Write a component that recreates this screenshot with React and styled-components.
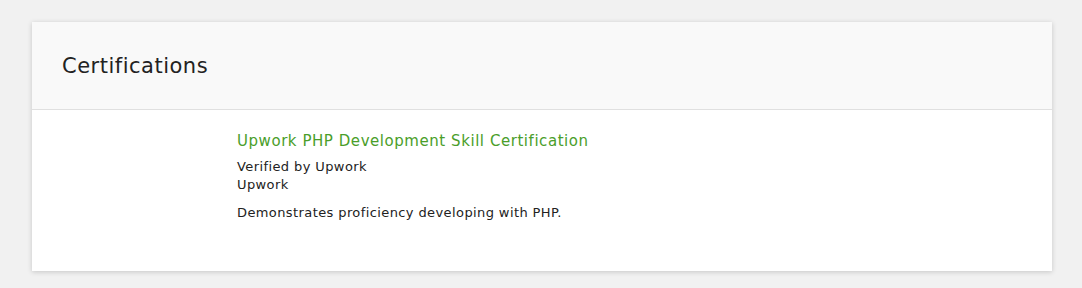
import React from "react";
import styled, { createGlobalStyle } from "styled-components";

const Global = createGlobalStyle`
    body{
        margin: 0;
        background: #f1f1f1;
        font-family: "DejaVu Sans", "Liberation Sans", sans-serif;
        color: #222;
    }
`;

const Page = styled.div`
    padding: 22px 30px 17px 32px;
`;

const Card = styled.section`
    width: 1020px;
    background: #fff;
    box-shadow: 0 1px 5px rgba(0,0,0,0.18);
`;

const CardHeader = styled.header`
    height: 88px;
    background: #f9f9f9;
    border-bottom: 1px solid #e0e0e0;
    padding: 0 30px;
    display: flex;
    align-items: center;
    box-sizing: border-box;

    h2{
        margin: 0;
        font-size: 21px;
        font-weight: 400;
        letter-spacing: 0.5px;
        color: #222;
    }
`;

const CardBody = styled.div`
    padding: 22px 30px 49px 205px;
`;

const CertTitle = styled.h3`
    margin: 0 0 8px;
    font-size: 15px;
    font-weight: 400;
    letter-spacing: 0.55px;
    color: #4a9e2a;
`;

const Line = styled.p`
    margin: 0;
    font-size: 13px;
    line-height: 18px;
    letter-spacing: 0.4px;
    margin-top: ${p => p.gap || 0}px;
`;

function App(){
    return (
        <>
            <Global />
            <Page>
                <Card>
                    <CardHeader>
                        <h2>Certifications</h2>
                    </CardHeader>
                    <CardBody>
                        <CertTitle>Upwork PHP Development Skill Certification</CertTitle>
                        <Line>Verified by Upwork</Line>
                        <Line>Upwork</Line>
                        <Line gap={10}>Demonstrates proficiency developing with PHP.</Line>
                    </CardBody>
                </Card>
            </Page>
        </>
    );
}

export default App;
